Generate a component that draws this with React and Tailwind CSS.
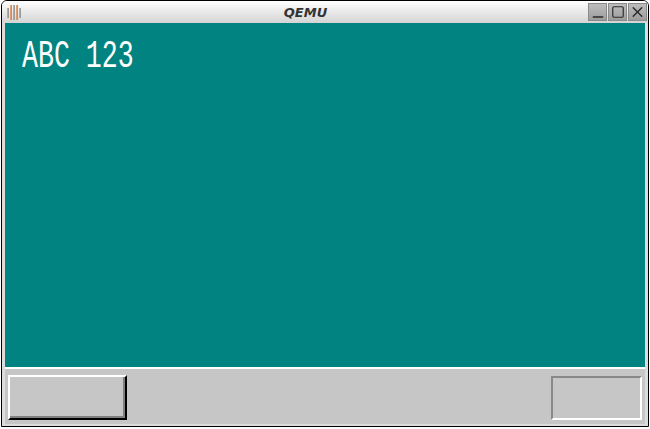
import { Minus, Square, X } from "lucide-react"

const AppIcon = () => (
  <svg width="18" height="18" viewBox="0 0 18 18">
    <defs>
      <linearGradient id="glow" x1="0" y1="0" x2="1" y2="0">
        <stop offset="0" stopColor="#b8b8b8" />
        <stop offset="0.3" stopColor="#e88a4a" />
        <stop offset="0.5" stopColor="#a8a8a8" />
        <stop offset="1" stopColor="#707070" />
      </linearGradient>
    </defs>
    {[2, 5, 8, 11, 14].map((x, i) => (
      <rect key={i} x={x} y={i === 0 || i === 4 ? 5 : 2} width="2" height={i === 0 || i === 4 ? 10 : 15} fill="url(#glow)" opacity="0.85" />
    ))}
  </svg>
)

const TitleButton = ({ children }) => (
  <div className="w-[19px] h-[18px] flex items-center justify-center bg-gradient-to-b from-[#bdbdbd] to-[#9c9c9c] border border-[#8a8a8a] text-[#2b2b2b]">
    {children}
  </div>
)

export default function App() {
  return (
    <div className="w-[650px] h-[429px] bg-white">
      <div className="ml-[1px] w-[648px] h-[427px] border border-black rounded-t-[6px] overflow-hidden flex flex-col bg-[#dcdcdc]">
        {/* title bar */}
        <div className="h-[22px] flex items-center pl-[3px] pr-[1px] bg-gradient-to-b from-white to-[#d4d4d4]">
          <AppIcon />
          <div
            className="flex-1 text-center text-[13px] font-bold italic text-[#333333] leading-none"
            style={{ fontFamily: '"DejaVu Sans", sans-serif' }}
          >
            QEMU
          </div>
          <div className="flex gap-[1px]">
            <TitleButton>
              <Minus size={16} strokeWidth={2.2} className="translate-y-[5px]" />
            </TitleButton>
            <TitleButton>
              <Square size={14} strokeWidth={2} />
            </TitleButton>
            <TitleButton>
              <X size={18} strokeWidth={2} />
            </TitleButton>
          </div>
        </div>

        {/* body */}
        <div className="flex-1 px-[3px] flex flex-col">
          <div className="h-[344px] bg-[#018481] pl-[17px] pt-[15px]">
            <div
              className="text-white text-[38px] leading-none origin-left scale-x-[0.7] whitespace-pre"
              style={{ fontFamily: '"Liberation Mono", monospace' }}
            >
              ABC 123
            </div>
          </div>
          <div className="h-[2px] bg-white" />
          <div className="h-[55px] bg-[#c6c6c6] flex items-start justify-between pl-[3px] pr-[3px] pt-[6px]">
            <div className="w-[119px] h-[45px] border-2 border-t-white border-l-white border-r-black border-b-black shadow-[inset_-2px_-2px_0_#808080] bg-[#c6c6c6]" />
            <div className="w-[91px] h-[44px] mt-[1px] border-2 border-t-[#888888] border-l-[#888888] border-r-white border-b-white bg-[#c6c6c6]" />
          </div>
        </div>
      </div>
    </div>
  )
}
